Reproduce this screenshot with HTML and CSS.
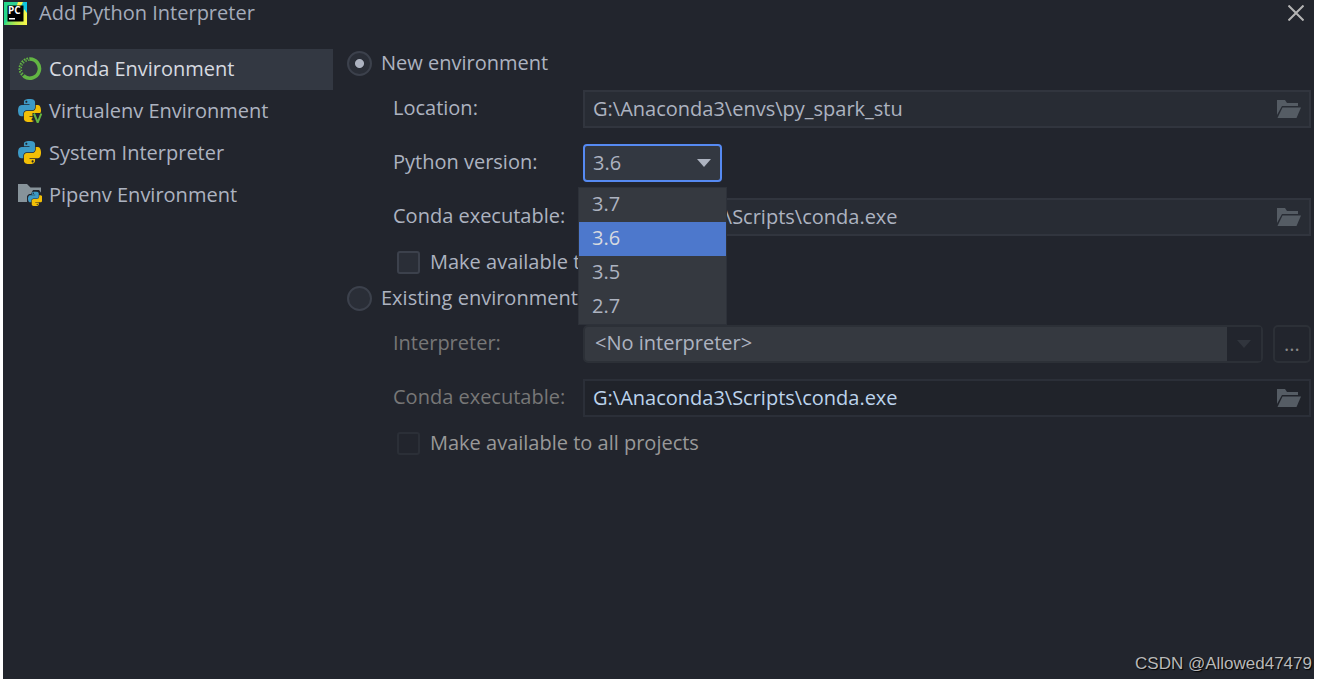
FILE: index.html
```html
<!DOCTYPE html>
<html lang="en">
<head>
<meta charset="utf-8">
<title>Add Python Interpreter</title>
<link rel="stylesheet" href="styles.css">
</head>
<body>
<svg class="defs" aria-hidden="true">
  <symbol id="python" viewBox="0 0 111 111">
    <path fill="#3d9ac6" d="M54.92 0C50.34.02 45.96.41 42.11 1.09 30.76 3.1 28.7 7.3 28.7 15.03v10.22h26.81v3.41H18.64c-7.79 0-14.62 4.68-16.75 13.59-2.46 10.21-2.57 16.58 0 27.25 1.91 7.94 6.46 13.59 14.25 13.59h9.22V70.84c0-8.85 7.66-16.66 16.75-16.66h26.78c7.45 0 13.41-6.14 13.41-13.62V15.03c0-7.27-6.13-12.72-13.41-13.94C64.28.32 59.5-.02 54.92 0zM40.42 8.22c2.77 0 5.03 2.3 5.03 5.12s-2.26 5.1-5.03 5.1c-2.78 0-5.03-2.28-5.03-5.1s2.25-5.12 5.03-5.12z"/>
    <path fill="#f2bf06" d="M85.64 28.66v11.91c0 9.23-7.83 17-16.75 17H42.11c-7.34 0-13.41 6.28-13.41 13.62v25.53c0 7.27 6.32 11.54 13.41 13.62 8.49 2.5 16.63 2.95 26.78 0 6.75-1.95 13.41-5.89 13.41-13.62V86.5H55.51v-3.41H95.7c7.79 0 10.7-5.43 13.41-13.59 2.8-8.4 2.68-16.48 0-27.25-1.93-7.76-5.6-13.59-13.41-13.59zM70.58 93.31c2.78 0 5.03 2.28 5.03 5.1s-2.25 5.12-5.03 5.12c-2.77 0-5.03-2.3-5.03-5.12s2.26-5.1 5.03-5.1z"/>
  </symbol>
  <symbol id="folder-open" viewBox="0 0 24 18">
    <path d="M0 0h8l2 3h11v3H5L0 15z"/>
    <path d="M5.500 7.500H24L19.500 18H0.500z"/>
  </symbol>
</svg>

<main class="dialog">
  <header class="titlebar">
    <svg class="app-icon" viewBox="0 0 23 23" aria-hidden="true">
      <defs>
        <linearGradient id="brand" x1="0" y1="0" x2="1" y2="0">
          <stop offset="0" stop-color="#21d789"/>
          <stop offset=".6" stop-color="#35cf9b"/>
          <stop offset="1" stop-color="#07c3f2"/>
        </linearGradient>
        <linearGradient id="brand-low" x1="0" y1="0" x2="1" y2="0">
          <stop offset="0" stop-color="#3fdc79"/>
          <stop offset=".5" stop-color="#b9ea4c"/>
          <stop offset="1" stop-color="#fcf84a"/>
        </linearGradient>
      </defs>
      <path fill="url(#brand)" d="M0 0h23v23H0z"/>
      <path fill="#fcf84a" d="M14 0h5l-3 6h-4z"/>
      <path fill="url(#brand-low)" d="M0 23l6-7h12l2-9 3 4v12z"/>
      <path d="M3.500 3.500h16v16h-16z"/>
      <text class="app-letters" x="4" y="12">PC</text>
      <path fill="#fff" d="M5 16h6v1.500H5z"/>
    </svg>
    <h1 class="title">Add Python Interpreter</h1>
    <button class="close" type="button" aria-label="Close">
      <svg viewBox="0 0 16 16" aria-hidden="true"><path d="M.5.5l15 15m0-15l-15 15"/></svg>
    </button>
  </header>

  <div class="body">
    <nav class="sidebar" aria-label="Interpreter type">
      <button class="kind kind-active" type="button">
        <svg class="kind-icon" viewBox="0 0 24 24" aria-hidden="true">
          <path fill="none" stroke="#62b543" stroke-width="3.600" d="M11.500 2A9.600 9.600 0 1 1 6 19.200"/>
          <path fill="none" stroke="#62b543" stroke-width="1.800" stroke-dasharray="1.800 1" d="M6 20A10.300 10.300 0 0 1 11.500 1.200"/>
          <path fill="none" stroke="#62b543" stroke-width="1.500" stroke-dasharray="1.300 1.500" d="M7 18.600A8.400 8.400 0 0 1 11.500 3.200"/>
        </svg>
        Conda Environment
      </button>
      <button class="kind" type="button">
        <svg class="kind-icon" viewBox="0 0 24 24" aria-hidden="true">
          <use href="#python" width="23" height="23"/>
          <path fill="#22252d" d="M14.500 13.500l1-1H24V24h-7.500l-2-4z"/>
          <path fill="#f2bf06" d="M14 12h9l-.6 2H14z"/>
          <path fill="none" stroke="#62b543" stroke-width="2" d="M16 14.500l3.700 9 3.600-9"/>
        </svg>
        Virtualenv Environment
      </button>
      <button class="kind" type="button">
        <svg class="kind-icon" viewBox="0 0 24 24" aria-hidden="true"><use href="#python" width="23" height="23"/></svg>
        System Interpreter
      </button>
      <button class="kind" type="button">
        <svg class="kind-icon" viewBox="0 0 24 24" aria-hidden="true">
          <path fill="#87939a" d="M0 1h9l3.500 3.500H23V19H0z"/>
          <path fill="#22252d" d="M13 11l2-4h6l3 4v13H10l-1-3V13l2-2z"/>
          <use href="#python" x="10" y="8.500" width="14.500" height="14.500"/>
        </svg>
        Pipenv Environment
      </button>
    </nav>

    <form class="form">
      <label class="choice"><input class="radio" type="radio" name="env" checked>New environment</label>
      <div class="fields">
        <label class="caption" for="location">Location:</label>
        <div class="path">
          <input class="path-input" id="location" type="text" value="G:\Anaconda3\envs\py_spark_stu">
          <button class="browse" type="button" aria-label="Browse"><svg viewBox="0 0 24 18"><use href="#folder-open"/></svg></button>
        </div>
        <label class="caption" for="version">Python version:</label>
        <div class="version">
          <select class="version-select" id="version"><option>3.7</option><option selected>3.6</option><option>3.5</option><option>2.7</option></select>
          <svg class="version-arrow" viewBox="0 0 14 8" aria-hidden="true"><path d="M0 0h14L7 8z"/></svg>
          <ul class="menu" role="listbox" aria-label="Python version">
            <li class="menu-item" role="option">3.7</li>
            <li class="menu-item menu-active" role="option" aria-selected="true">3.6</li>
            <li class="menu-item" role="option">3.5</li>
            <li class="menu-item" role="option">2.7</li>
          </ul>
        </div>
        <label class="caption" for="conda-new">Conda executable:</label>
        <div class="path">
          <input class="path-input" id="conda-new" type="text" value="G:\Anaconda3\Scripts\conda.exe">
          <button class="browse" type="button" aria-label="Browse"><svg viewBox="0 0 24 18"><use href="#folder-open"/></svg></button>
        </div>
      </div>
      <label class="share"><input class="check" type="checkbox">Make available to all projects</label>

      <label class="choice"><input class="radio" type="radio" name="env">Existing environment</label>
      <div class="fields">
        <label class="caption caption-off" for="interpreter">Interpreter:</label>
        <div class="interpreter">
          <div class="combo">
            <select class="combo-select" id="interpreter" disabled><option>&lt;No interpreter&gt;</option></select>
            <span class="combo-arrow"><svg viewBox="0 0 14 8" aria-hidden="true"><path d="M0 0h14L7 8z"/></svg></span>
          </div>
          <button class="more" type="button" disabled>...</button>
        </div>
        <label class="caption caption-off" for="conda-old">Conda executable:</label>
        <div class="path path-off">
          <input class="path-input" id="conda-old" type="text" value="G:\Anaconda3\Scripts\conda.exe" disabled>
          <button class="browse" type="button" aria-label="Browse" disabled><svg viewBox="0 0 24 18"><use href="#folder-open"/></svg></button>
        </div>
      </div>
      <label class="share share-off"><input class="check" type="checkbox" disabled>Make available to all projects</label>
    </form>
  </div>
  <footer class="credit">CSDN @Allowed47479</footer>
</main>
</body>
</html>
```
FILE: styles.css
```css
* { box-sizing: border-box; }

body {
  margin: 0;
  background: #fff;
  color: #adb3c0;
  font: 20px/28px "Open Sans", "Noto Sans", sans-serif;
}

button, input, select { font: inherit; color: inherit; }
button { cursor: pointer; }
svg { display: block; }
.defs { position: absolute; width: 0; height: 0; }

.dialog {
  display: flex;
  flex-direction: column;
  min-height: calc(100vh - 2px);
  margin: 0 13px 2px 3px;
  background: #22252d;
}

.titlebar {
  display: flex;
  align-items: center;
  gap: 12px;
  height: 26px;
  padding: 0 10px 0 1px;
}
.app-icon { width: 23px; height: 23px; }
.app-letters { fill: #fff; font: bold 10px "Open Sans", sans-serif; }
.title { flex: 1; margin: 0; font-size: 20px; font-weight: 400; color: #a4abba; }
.close { padding: 0; border: 0; background: none; }
.close svg { width: 16px; height: 16px; fill: none; stroke: #b4b4b4; stroke-width: 2; }

.body {
  flex: 1;
  display: grid;
  grid-template-columns: 323px 1fr;
  gap: 14px;
  padding: 23px 3px 0 7px;
}

.sidebar { display: flex; flex-direction: column; gap: 1px; }
.kind {
  display: flex;
  align-items: center;
  gap: 7px;
  height: 41px;
  padding: 0 8px 2px;
  border: 0;
  background: none;
  text-align: left;
}
.kind-active { background: #333842; color: #d7dae0; }
.kind-icon { width: 24px; height: 24px; }

.choice { display: flex; align-items: center; gap: 9px; height: 28px; }
.radio, .check { appearance: none; flex: none; margin: 0; border: 2px solid #3c414c; background: #2a2e37; }
.radio { width: 25px; height: 25px; border-radius: 50%; }
.radio:checked { background: radial-gradient(circle, #adb3c0 4px, #2a2e37 5px); }

.fields {
  display: grid;
  grid-template-columns: 190px 1fr;
  row-gap: 16px;
  align-items: center;
  margin-top: 13px;
  padding-left: 46px;
}
.caption { height: 30px; }
.caption-off { color: #777; }

.path {
  display: flex;
  align-items: center;
  height: 38px;
  padding: 0 8px;
  border: 2px solid #31353e;
  background: #282c34;
}
.path-input { flex: 1; min-width: 0; height: 32px; padding: 0 0 2px; border: 0; outline: 0; background: none; }
.browse { padding: 0; border: 0; background: none; }
.browse svg { width: 24px; height: 18px; fill: #555c64; }
.path-off { border-color: #2b2f38; background: #20232a; }
.path-off .path-input { color: #bcd3ec; }

.version { position: relative; width: 139px; }
.version-select {
  display: block;
  appearance: none;
  width: 100%;
  height: 38px;
  padding: 0 8px;
  border: 2px solid #568af2;
  border-radius: 4px;
  outline: 0;
  background: #333841;
}
.version-arrow { position: absolute; top: 15px; right: 11px; width: 14px; height: 8px; fill: #adb3c0; }
.menu {
  position: absolute;
  z-index: 1;
  top: 43px;
  left: -5px;
  right: -5px;
  margin: 0;
  padding: 0;
  border: 1px solid #2d3139;
  background: #353940;
  list-style: none;
}
.menu-item { padding: 2px 13px 4px; }
.menu-active { background: #4d78cc; color: #d7dae0; }

.share { display: flex; align-items: center; gap: 10px; height: 28px; margin: 12px 0 8px; padding-left: 50px; }
.check { width: 23px; height: 23px; border-radius: 3px; }
.share-off { color: #999; }
.share-off .check { border-color: #2b2f37; background: #22252d; }

.interpreter { display: flex; gap: 10px; }
.combo { flex: 1; display: flex; height: 38px; border: 2px solid #2c3037; border-radius: 5px; background: #353940; }
.combo-select { appearance: none; flex: 1; padding: 0 10px 2px; border: 0; background: none; opacity: 1; }
.combo-arrow { display: flex; align-items: center; justify-content: center; width: 34px; background: #22252d; }
.combo-arrow svg { width: 14px; height: 8px; fill: #31353d; }
.more { width: 38px; height: 38px; padding: 0; border: 2px solid #2c3037; border-radius: 5px; background: none; color: #888; }

.credit {
  align-self: flex-end;
  padding: 0 2px 3px 0;
  color: #b9b9b9;
  font: 17px/24px "Liberation Sans", Arial, sans-serif;
  text-shadow: 1px 1px 1px #000;
}
```
